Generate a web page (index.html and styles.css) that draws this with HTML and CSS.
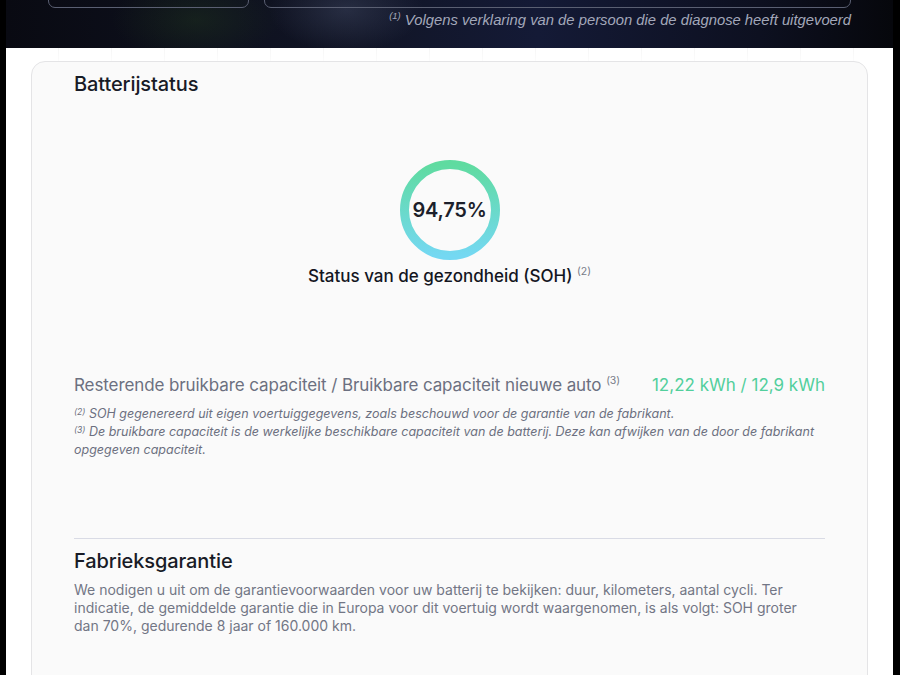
FILE: index.html
```html
<!DOCTYPE html>
<html lang="nl">
<head>
<meta charset="utf-8">
<title>Batterijstatus</title>
<link rel="stylesheet" href="styles.css">
</head>
<body>
<div class="frame">
  <header class="hero">
    <div class="hero-boxes">
      <div class="hero-box hero-box-small"></div>
      <div class="hero-box hero-box-wide"></div>
    </div>
    <p class="hero-note"><sup>(1)</sup> Volgens verklaring van de persoon die de diagnose heeft uitgevoerd</p>
  </header>
  <main class="page">
    <section class="card">
      <h2 class="card-title">Batterijstatus</h2>
      <div class="soh">
        <div class="ring">
          <svg class="ring-svg" width="100" height="100" viewBox="0 0 100 100">
            <defs>
              <linearGradient id="ringGrad" x1="0" y1="0" x2="0" y2="1">
                <stop offset="0" stop-color="#5fdba0"/>
                <stop offset="1" stop-color="#74d8f2"/>
              </linearGradient>
            </defs>
            <circle cx="50" cy="50" r="45.5" fill="none" stroke="url(#ringGrad)" stroke-width="9"/>
          </svg>
          <span class="ring-value">94,75%</span>
        </div>
        <p class="soh-label">Status van de gezondheid (SOH) <sup>(2)</sup></p>
      </div>
      <div class="capacity">
        <span class="capacity-label">Resterende bruikbare capaciteit / Bruikbare capaciteit nieuwe auto <sup>(3)</sup></span>
        <span class="capacity-value">12,22 kWh / 12,9 kWh</span>
      </div>
      <div class="notes">
        <p><sup>(2)</sup> SOH gegenereerd uit eigen voertuiggegevens, zoals beschouwd voor de garantie van de fabrikant.</p>
        <p><sup>(3)</sup> De bruikbare capaciteit is de werkelijke beschikbare capaciteit van de batterij. Deze kan afwijken van de door de fabrikant opgegeven capaciteit.</p>
      </div>
      <hr class="divider">
      <h2 class="card-title">Fabrieksgarantie</h2>
      <p class="warranty">We nodigen u uit om de garantievoorwaarden voor uw batterij te bekijken: duur, kilometers, aantal cycli. Ter indicatie, de gemiddelde garantie die in Europa voor dit voertuig wordt waargenomen, is als volgt: SOH groter dan 70%, gedurende 8 jaar of 160.000 km.</p>
    </section>
  </main>
</div>
</body>
</html>
```
FILE: styles.css
```css
* { box-sizing: border-box; }
html, body { margin: 0; padding: 0; }
body {
  background: #000;
  font-family: Inter, "Noto Sans", "Liberation Sans", sans-serif;
  width: 900px;
  height: 675px;
  overflow: hidden;
}
sup { line-height: 0; }
.frame {
  margin: 0 7px 0 6px;
  height: 675px;
  background: #ffffff;
  overflow: hidden;
}
.hero {
  height: 48px;
  padding: 0 42px;
  background:
    radial-gradient(ellipse 120px 60px at 190px 20px, rgba(40, 70, 30, 0.3), transparent 70%),
    radial-gradient(ellipse 110px 60px at 340px 10px, rgba(80, 90, 120, 0.35), transparent 70%),
    linear-gradient(90deg, #090a12 0%, #111526 40%, #141a36 60%, #0d1020 85%, #06070c 100%);
  display: flex;
  flex-direction: column;
  overflow: hidden;
}
.hero-boxes {
  display: flex;
  gap: 15px;
  margin-top: -12px;
  height: 20px;
  flex-shrink: 0;
}
.hero-box {
  border: 1.5px solid #5a5f72;
  border-radius: 7px;
  height: 20px;
}
.hero-box-small { width: 201px; }
.hero-box-wide { flex: 1; }
.hero-note {
  margin: 3px 0 0;
  text-align: right;
  font-family: "Liberation Sans", Arial, sans-serif;
  font-style: italic;
  font-size: 14.8px;
  line-height: 18px;
  color: #a3a8ba;
}
.hero-note sup { font-size: 9.5px; vertical-align: 6px; }
.page {
  padding: 13px 25px;
  background:
    linear-gradient(180deg, rgba(255,255,255,0.4) 0px, #fff 20px),
    repeating-linear-gradient(90deg, transparent 0 52px, #f0f0f0 52px 53px);
  background-repeat: no-repeat;
}
.card {
  background: #fafafa;
  border: 1px solid #e4e4e6;
  border-radius: 14px;
  padding: 9px 42px 40px 42px;
  height: 700px;
}
.card-title {
  margin: 0;
  font-size: 20px;
  line-height: 26px;
  font-weight: 500;
  color: #181b26;
  letter-spacing: -0.1px;
}
.soh {
  display: flex;
  flex-direction: column;
  align-items: center;
  margin-top: 63px;
}
.ring {
  position: relative;
  width: 100px;
  height: 100px;
}
.ring-svg { display: block; }
.ring-value {
  position: absolute;
  inset: 0;
  display: flex;
  align-items: center;
  justify-content: center;
  font-size: 20px;
  font-weight: 600;
  color: #1c1f2b;
  letter-spacing: -0.2px;
}
.soh-label {
  margin: 6px 0 0;
  font-size: 17px;
  line-height: 20px;
  font-weight: 500;
  color: #14161f;
}
.soh-label sup, .capacity-label sup {
  font-size: 10.5px;
  font-weight: 400;
  color: #777b88;
  vertical-align: 7px;
}
.capacity {
  display: flex;
  justify-content: space-between;
  align-items: center;
  margin-top: 88px;
  line-height: 22px;
}
.capacity-label {
  font-size: 17px;
  color: #6c7080;
  letter-spacing: -0.1px;
}
.capacity-value {
  font-size: 17px;
  color: #52cf9c;
  font-weight: 400;
}
.notes {
  margin-top: 9px;
}
.notes p {
  margin: 0;
  font-size: 12.5px;
  line-height: 18px;
  font-style: italic;
  color: #6c7080;
}
.notes sup {
  font-size: 8.5px;
  vertical-align: 3px;
}
.divider {
  border: 0;
  border-top: 1.5px solid #d9dbe5;
  margin: 79px 0 9px;
}
.warranty {
  margin: 7px 0 0;
  font-size: 14px;
  line-height: 18px;
  color: #727685;
}
```
